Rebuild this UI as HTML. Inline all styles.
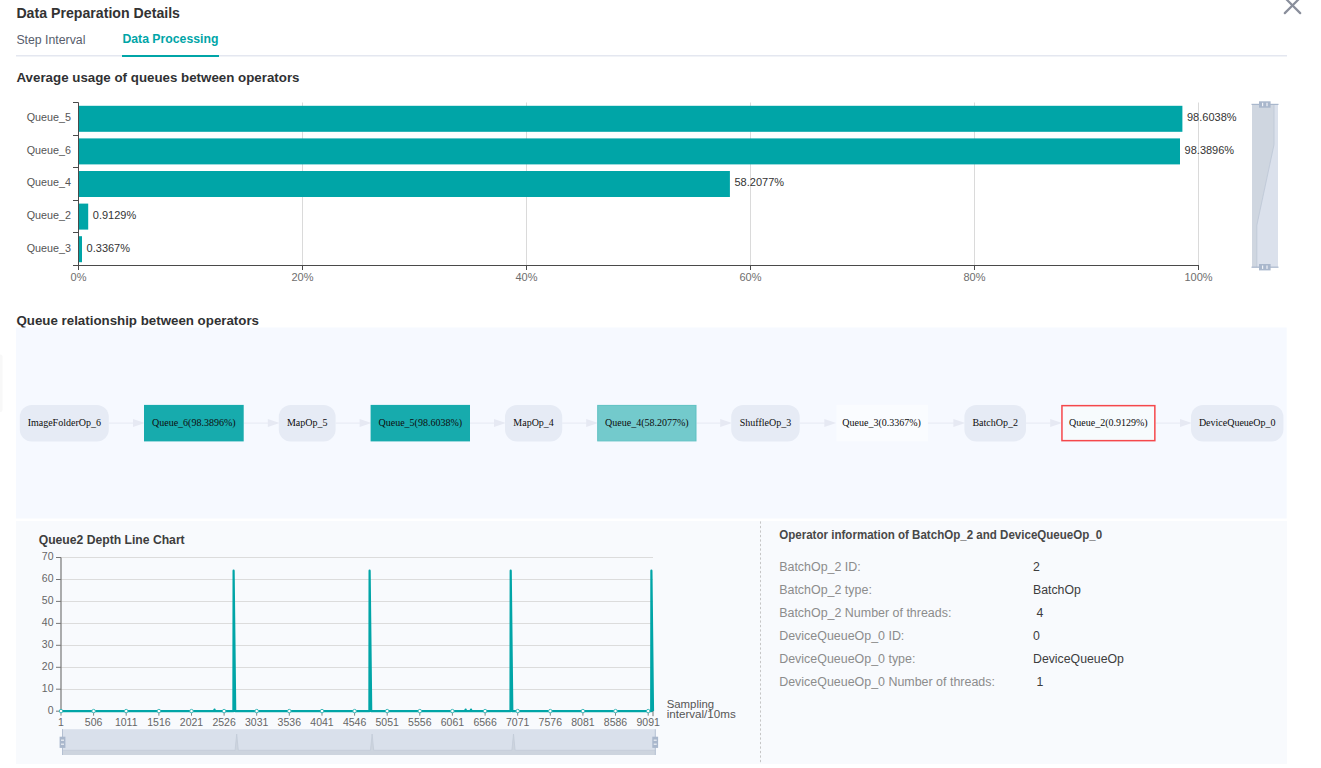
<!DOCTYPE html>
<html><head><meta charset="utf-8"><title>Data Preparation Details</title>
<style>
html,body{margin:0;padding:0;background:#fff;width:1321px;height:768px;overflow:hidden}
svg{display:block}
text{font-family:"Liberation Sans",sans-serif}
.serif{font-family:"Liberation Serif",serif}
</style></head><body>
<svg width="1321" height="768" viewBox="0 0 1321 768">
<rect x="0" y="0" width="1321" height="768" fill="#ffffff"/>

<text x="16.4" y="17.7" font-size="14.6" font-weight="bold" fill="#333333" textLength="163.6" lengthAdjust="spacingAndGlyphs">Data Preparation Details</text>
<text x="16.4" y="43.6" font-size="12" fill="#575d6c" textLength="69" lengthAdjust="spacingAndGlyphs">Step Interval</text>
<text x="122.4" y="43.3" font-size="12" font-weight="bold" fill="#00a5a7" textLength="96" lengthAdjust="spacingAndGlyphs">Data Processing</text>
<rect x="16" y="55" width="1271" height="1.5" fill="#e4e7f0"/>
<rect x="122" y="55" width="97" height="2" fill="#00a5a7"/>
<g stroke="#8a8f9c" stroke-width="2.2" stroke-linecap="round"><line x1="1284.8" y1="13.1" x2="1300.4" y2="-2.5"/><line x1="1300.2" y1="13.1" x2="1284.6" y2="-2.5"/></g>
<text x="16.5" y="82.3" font-size="13" font-weight="bold" fill="#303133" textLength="283" lengthAdjust="spacingAndGlyphs">Average usage of queues between operators</text>
<line x1="302.5" y1="102.5" x2="302.5" y2="265.5" stroke="#dadada" stroke-width="1"/>
<line x1="526.5" y1="102.5" x2="526.5" y2="265.5" stroke="#dadada" stroke-width="1"/>
<line x1="750.5" y1="102.5" x2="750.5" y2="265.5" stroke="#dadada" stroke-width="1"/>
<line x1="974.5" y1="102.5" x2="974.5" y2="265.5" stroke="#dadada" stroke-width="1"/>
<line x1="1198.5" y1="102.5" x2="1198.5" y2="265.5" stroke="#dadada" stroke-width="1"/>
<rect x="78.0" y="105.8" width="1104.4" height="26" fill="#00a5a7"/>
<text x="71" y="120.9" font-size="11" fill="#555" text-anchor="end" textLength="44.3" lengthAdjust="spacingAndGlyphs">Queue_5</text>
<text x="1187.0" y="120.9" font-size="11" fill="#333">98.6038%</text>
<rect x="78.0" y="138.4" width="1102.0" height="26" fill="#00a5a7"/>
<text x="71" y="153.6" font-size="11" fill="#555" text-anchor="end" textLength="44.3" lengthAdjust="spacingAndGlyphs">Queue_6</text>
<text x="1184.6" y="153.6" font-size="11" fill="#333">98.3896%</text>
<rect x="78.0" y="171.0" width="651.9" height="26" fill="#00a5a7"/>
<text x="71" y="186.4" font-size="11" fill="#555" text-anchor="end" textLength="44.3" lengthAdjust="spacingAndGlyphs">Queue_4</text>
<text x="734.5" y="186.4" font-size="11" fill="#333">58.2077%</text>
<rect x="78.0" y="203.6" width="10.2" height="26" fill="#00a5a7"/>
<text x="71" y="219.1" font-size="11" fill="#555" text-anchor="end" textLength="44.3" lengthAdjust="spacingAndGlyphs">Queue_2</text>
<text x="92.8" y="219.1" font-size="11" fill="#333">0.9129%</text>
<rect x="78.0" y="236.2" width="4.0" height="26" fill="#00a5a7"/>
<text x="71" y="251.8" font-size="11" fill="#555" text-anchor="end" textLength="44.3" lengthAdjust="spacingAndGlyphs">Queue_3</text>
<text x="86.6" y="251.8" font-size="11" fill="#333">0.3367%</text>
<line x1="78.5" y1="102.5" x2="78.5" y2="266.0" stroke="#4a4a4a" stroke-width="1"/>
<line x1="73.0" y1="102.5" x2="78.5" y2="102.5" stroke="#4a4a4a" stroke-width="1"/>
<line x1="73.0" y1="135.5" x2="78.5" y2="135.5" stroke="#4a4a4a" stroke-width="1"/>
<line x1="73.0" y1="167.5" x2="78.5" y2="167.5" stroke="#4a4a4a" stroke-width="1"/>
<line x1="73.0" y1="200.5" x2="78.5" y2="200.5" stroke="#4a4a4a" stroke-width="1"/>
<line x1="73.0" y1="232.5" x2="78.5" y2="232.5" stroke="#4a4a4a" stroke-width="1"/>
<line x1="73.0" y1="265.5" x2="78.5" y2="265.5" stroke="#4a4a4a" stroke-width="1"/>
<line x1="74.0" y1="265.5" x2="1199.0" y2="265.5" stroke="#4a4a4a" stroke-width="1"/>
<line x1="78.5" y1="265.5" x2="78.5" y2="270.0" stroke="#4a4a4a" stroke-width="1"/>
<text x="78.5" y="280.7" font-size="11" fill="#6e6e6e" text-anchor="middle">0%</text>
<line x1="302.5" y1="265.5" x2="302.5" y2="270.0" stroke="#4a4a4a" stroke-width="1"/>
<text x="302.5" y="280.7" font-size="11" fill="#6e6e6e" text-anchor="middle">20%</text>
<line x1="526.5" y1="265.5" x2="526.5" y2="270.0" stroke="#4a4a4a" stroke-width="1"/>
<text x="526.5" y="280.7" font-size="11" fill="#6e6e6e" text-anchor="middle">40%</text>
<line x1="750.5" y1="265.5" x2="750.5" y2="270.0" stroke="#4a4a4a" stroke-width="1"/>
<text x="750.5" y="280.7" font-size="11" fill="#6e6e6e" text-anchor="middle">60%</text>
<line x1="974.5" y1="265.5" x2="974.5" y2="270.0" stroke="#4a4a4a" stroke-width="1"/>
<text x="974.5" y="280.7" font-size="11" fill="#6e6e6e" text-anchor="middle">80%</text>
<line x1="1198.5" y1="265.5" x2="1198.5" y2="270.0" stroke="#4a4a4a" stroke-width="1"/>
<text x="1198.5" y="280.7" font-size="11" fill="#6e6e6e" text-anchor="middle">100%</text>
<rect x="1252" y="104.4" width="26" height="162.8" fill="#dbe1ec"/>
<path d="M1252,104.4 L1274,104.4 L1274,144.7 L1256.8,225.4 L1256.8,267.2 L1252,267.2 Z" fill="#cfd6e0"/>
<path d="M1274,104.4 L1274,144.7 L1256.8,225.4 L1256.8,267.2" fill="none" stroke="#bcc6d6" stroke-width="0.8"/>
<line x1="1251.5" y1="104.4" x2="1278.5" y2="104.4" stroke="#a9b7cc" stroke-width="1.2"/>
<line x1="1251.5" y1="267.2" x2="1278.5" y2="267.2" stroke="#a9b7cc" stroke-width="1.2"/>
<rect x="1259" y="101.3" width="11.6" height="6.4" fill="#a9b7cc"/>
<rect x="1262" y="102.8" width="1.2" height="3.4" fill="#eef1f6"/><rect x="1266.4" y="102.8" width="1.2" height="3.4" fill="#eef1f6"/>
<rect x="1259" y="264" width="11.6" height="6.4" fill="#a9b7cc"/>
<rect x="1262" y="265.5" width="1.2" height="3.4" fill="#eef1f6"/><rect x="1266.4" y="265.5" width="1.2" height="3.4" fill="#eef1f6"/>
<rect x="-2" y="354.6" width="4.5" height="57.3" rx="2" fill="#f8f8f8"/>
<text x="16.5" y="324.7" font-size="13" font-weight="bold" fill="#303133" textLength="242.5" lengthAdjust="spacingAndGlyphs">Queue relationship between operators</text>
<rect x="16" y="327.5" width="1270.7" height="191" fill="#f6f9ff"/>
<line x1="108.8" y1="423.1" x2="134" y2="423.1" stroke="#e6e9f3" stroke-width="1"/>
<path d="M133,419.1 L144.8,423.1 L133,427.1 Z" fill="#e6e9f3"/>
<line x1="243.7" y1="423.1" x2="268.8" y2="423.1" stroke="#e6e9f3" stroke-width="1"/>
<path d="M267.8,419.1 L279.6,423.1 L267.8,427.1 Z" fill="#e6e9f3"/>
<line x1="335.6" y1="423.1" x2="360.6" y2="423.1" stroke="#e6e9f3" stroke-width="1"/>
<path d="M359.6,419.1 L371.40000000000003,423.1 L359.6,427.1 Z" fill="#e6e9f3"/>
<line x1="470" y1="423.1" x2="495" y2="423.1" stroke="#e6e9f3" stroke-width="1"/>
<path d="M494,419.1 L505.8,423.1 L494,427.1 Z" fill="#e6e9f3"/>
<line x1="562.2" y1="423.1" x2="587.2" y2="423.1" stroke="#e6e9f3" stroke-width="1"/>
<path d="M586.2,419.1 L598.0,423.1 L586.2,427.1 Z" fill="#e6e9f3"/>
<line x1="696.5" y1="423.1" x2="721.2" y2="423.1" stroke="#e6e9f3" stroke-width="1"/>
<path d="M720.2,419.1 L732.0,423.1 L720.2,427.1 Z" fill="#e6e9f3"/>
<line x1="799.7" y1="423.1" x2="825.3" y2="423.1" stroke="#e6e9f3" stroke-width="1"/>
<path d="M824.3,419.1 L836.0999999999999,423.1 L824.3,427.1 Z" fill="#e6e9f3"/>
<line x1="928" y1="423.1" x2="954.4" y2="423.1" stroke="#e6e9f3" stroke-width="1"/>
<path d="M953.4,419.1 L965.1999999999999,423.1 L953.4,427.1 Z" fill="#e6e9f3"/>
<line x1="1026" y1="423.1" x2="1051.2" y2="423.1" stroke="#e6e9f3" stroke-width="1"/>
<path d="M1050.2,419.1 L1062.0,423.1 L1050.2,427.1 Z" fill="#e6e9f3"/>
<line x1="1155.6" y1="423.1" x2="1181" y2="423.1" stroke="#e6e9f3" stroke-width="1"/>
<path d="M1180,419.1 L1191.8,423.1 L1180,427.1 Z" fill="#e6e9f3"/>
<rect x="19.8" y="404.9" width="89.0" height="36.5" rx="12" ry="12" fill="#e6ebf5"/>
<text class="serif" x="64.3" y="426.1" font-size="10" fill="#0d0d0d" text-anchor="middle">ImageFolderOp_6</text>
<rect x="144" y="404.9" width="99.7" height="36.5" fill="#17abad"/>
<text class="serif" x="193.8" y="426.1" font-size="10" fill="#0d0d0d" text-anchor="middle">Queue_6(98.3896%)</text>
<rect x="278.8" y="404.9" width="56.8" height="36.5" rx="12" ry="12" fill="#e6ebf5"/>
<text class="serif" x="307.2" y="426.1" font-size="10" fill="#0d0d0d" text-anchor="middle">MapOp_5</text>
<rect x="370.6" y="404.9" width="99.4" height="36.5" fill="#17abad"/>
<text class="serif" x="420.3" y="426.1" font-size="10" fill="#0d0d0d" text-anchor="middle">Queue_5(98.6038%)</text>
<rect x="505" y="404.9" width="57.2" height="36.5" rx="12" ry="12" fill="#e6ebf5"/>
<text class="serif" x="533.6" y="426.1" font-size="10" fill="#0d0d0d" text-anchor="middle">MapOp_4</text>
<rect x="597.7" y="405.4" width="98.3" height="35.5" fill="#73cacc" stroke="#5fc1c3" stroke-width="1"/>
<text class="serif" x="646.9" y="426.1" font-size="10" fill="#0d0d0d" text-anchor="middle">Queue_4(58.2077%)</text>
<rect x="731.2" y="404.9" width="68.5" height="36.5" rx="12" ry="12" fill="#e6ebf5"/>
<text class="serif" x="765.5" y="426.1" font-size="10" fill="#0d0d0d" text-anchor="middle">ShuffleOp_3</text>
<rect x="836.3" y="404.9" width="91.7" height="36.5" fill="#fafcff"/>
<text class="serif" x="881.6" y="426.1" font-size="10" fill="#0d0d0d" text-anchor="middle">Queue_3(0.3367%)</text>
<rect x="964.4" y="404.9" width="61.6" height="36.5" rx="12" ry="12" fill="#e6ebf5"/>
<text class="serif" x="995.2" y="426.1" font-size="10" fill="#0d0d0d" text-anchor="middle">BatchOp_2</text>
<rect x="1061.95" y="405.65" width="92.9" height="35.0" fill="#f7fbfd" stroke="#f5484b" stroke-width="1.5"/>
<text class="serif" x="1108.4" y="426.1" font-size="10" fill="#0d0d0d" text-anchor="middle">Queue_2(0.9129%)</text>
<rect x="1191" y="404.9" width="92.4" height="36.5" rx="12" ry="12" fill="#e6ebf5"/>
<text class="serif" x="1237.2" y="426.1" font-size="10" fill="#0d0d0d" text-anchor="middle">DeviceQueueOp_0</text>
<rect x="16" y="521" width="1271" height="243" fill="#f8fafd"/>
<line x1="760.5" y1="521.4" x2="760.5" y2="764" stroke="#c6c6c6" stroke-width="1" stroke-dasharray="2.3,2.2"/>
<text x="38.7" y="543.6" font-size="12" font-weight="bold" fill="#3d3d3d" textLength="146" lengthAdjust="spacingAndGlyphs">Queue2 Depth Line Chart</text>
<line x1="61.0" y1="689.5" x2="653.0" y2="689.5" stroke="#dcdcdc" stroke-width="1"/>
<line x1="61.0" y1="667.5" x2="653.0" y2="667.5" stroke="#dcdcdc" stroke-width="1"/>
<line x1="61.0" y1="645.5" x2="653.0" y2="645.5" stroke="#dcdcdc" stroke-width="1"/>
<line x1="61.0" y1="623.5" x2="653.0" y2="623.5" stroke="#dcdcdc" stroke-width="1"/>
<line x1="61.0" y1="601.5" x2="653.0" y2="601.5" stroke="#dcdcdc" stroke-width="1"/>
<line x1="61.0" y1="579.5" x2="653.0" y2="579.5" stroke="#dcdcdc" stroke-width="1"/>
<line x1="61.0" y1="557.5" x2="653.0" y2="557.5" stroke="#dcdcdc" stroke-width="1"/>
<line x1="61.0" y1="557.5" x2="61.0" y2="711.2" stroke="#777" stroke-width="1.2"/>
<line x1="56.0" y1="711.2" x2="61.0" y2="711.2" stroke="#777" stroke-width="1"/>
<text x="53.5" y="713.7" font-size="10.5" fill="#666" text-anchor="end">0</text>
<line x1="56.0" y1="689.2" x2="61.0" y2="689.2" stroke="#777" stroke-width="1"/>
<text x="53.5" y="691.7" font-size="10.5" fill="#666" text-anchor="end">10</text>
<line x1="56.0" y1="667.3" x2="61.0" y2="667.3" stroke="#777" stroke-width="1"/>
<text x="53.5" y="669.8" font-size="10.5" fill="#666" text-anchor="end">20</text>
<line x1="56.0" y1="645.3" x2="61.0" y2="645.3" stroke="#777" stroke-width="1"/>
<text x="53.5" y="647.8" font-size="10.5" fill="#666" text-anchor="end">30</text>
<line x1="56.0" y1="623.4" x2="61.0" y2="623.4" stroke="#777" stroke-width="1"/>
<text x="53.5" y="625.9" font-size="10.5" fill="#666" text-anchor="end">40</text>
<line x1="56.0" y1="601.4" x2="61.0" y2="601.4" stroke="#777" stroke-width="1"/>
<text x="53.5" y="603.9" font-size="10.5" fill="#666" text-anchor="end">50</text>
<line x1="56.0" y1="579.5" x2="61.0" y2="579.5" stroke="#777" stroke-width="1"/>
<text x="53.5" y="582.0" font-size="10.5" fill="#666" text-anchor="end">60</text>
<line x1="56.0" y1="557.5" x2="61.0" y2="557.5" stroke="#777" stroke-width="1"/>
<text x="53.5" y="560.0" font-size="10.5" fill="#666" text-anchor="end">70</text>
<line x1="61.0" y1="711.2" x2="653.0" y2="711.2" stroke="#333" stroke-width="1"/>
<line x1="61.0" y1="711.2" x2="61.0" y2="715.7" stroke="#858585" stroke-width="1"/>
<text x="61.0" y="725.8" font-size="10.5" fill="#666" text-anchor="middle">1</text>
<line x1="93.6" y1="711.2" x2="93.6" y2="715.7" stroke="#858585" stroke-width="1"/>
<text x="93.6" y="725.8" font-size="10.5" fill="#666" text-anchor="middle">506</text>
<line x1="126.2" y1="711.2" x2="126.2" y2="715.7" stroke="#858585" stroke-width="1"/>
<text x="126.2" y="725.8" font-size="10.5" fill="#666" text-anchor="middle">1011</text>
<line x1="158.9" y1="711.2" x2="158.9" y2="715.7" stroke="#858585" stroke-width="1"/>
<text x="158.9" y="725.8" font-size="10.5" fill="#666" text-anchor="middle">1516</text>
<line x1="191.5" y1="711.2" x2="191.5" y2="715.7" stroke="#858585" stroke-width="1"/>
<text x="191.5" y="725.8" font-size="10.5" fill="#666" text-anchor="middle">2021</text>
<line x1="224.1" y1="711.2" x2="224.1" y2="715.7" stroke="#858585" stroke-width="1"/>
<text x="224.1" y="725.8" font-size="10.5" fill="#666" text-anchor="middle">2526</text>
<line x1="256.7" y1="711.2" x2="256.7" y2="715.7" stroke="#858585" stroke-width="1"/>
<text x="256.7" y="725.8" font-size="10.5" fill="#666" text-anchor="middle">3031</text>
<line x1="289.3" y1="711.2" x2="289.3" y2="715.7" stroke="#858585" stroke-width="1"/>
<text x="289.3" y="725.8" font-size="10.5" fill="#666" text-anchor="middle">3536</text>
<line x1="322.0" y1="711.2" x2="322.0" y2="715.7" stroke="#858585" stroke-width="1"/>
<text x="322.0" y="725.8" font-size="10.5" fill="#666" text-anchor="middle">4041</text>
<line x1="354.6" y1="711.2" x2="354.6" y2="715.7" stroke="#858585" stroke-width="1"/>
<text x="354.6" y="725.8" font-size="10.5" fill="#666" text-anchor="middle">4546</text>
<line x1="387.2" y1="711.2" x2="387.2" y2="715.7" stroke="#858585" stroke-width="1"/>
<text x="387.2" y="725.8" font-size="10.5" fill="#666" text-anchor="middle">5051</text>
<line x1="419.8" y1="711.2" x2="419.8" y2="715.7" stroke="#858585" stroke-width="1"/>
<text x="419.8" y="725.8" font-size="10.5" fill="#666" text-anchor="middle">5556</text>
<line x1="452.4" y1="711.2" x2="452.4" y2="715.7" stroke="#858585" stroke-width="1"/>
<text x="452.4" y="725.8" font-size="10.5" fill="#666" text-anchor="middle">6061</text>
<line x1="485.1" y1="711.2" x2="485.1" y2="715.7" stroke="#858585" stroke-width="1"/>
<text x="485.1" y="725.8" font-size="10.5" fill="#666" text-anchor="middle">6566</text>
<line x1="517.7" y1="711.2" x2="517.7" y2="715.7" stroke="#858585" stroke-width="1"/>
<text x="517.7" y="725.8" font-size="10.5" fill="#666" text-anchor="middle">7071</text>
<line x1="550.3" y1="711.2" x2="550.3" y2="715.7" stroke="#858585" stroke-width="1"/>
<text x="550.3" y="725.8" font-size="10.5" fill="#666" text-anchor="middle">7576</text>
<line x1="582.9" y1="711.2" x2="582.9" y2="715.7" stroke="#858585" stroke-width="1"/>
<text x="582.9" y="725.8" font-size="10.5" fill="#666" text-anchor="middle">8081</text>
<line x1="615.5" y1="711.2" x2="615.5" y2="715.7" stroke="#858585" stroke-width="1"/>
<text x="615.5" y="725.8" font-size="10.5" fill="#666" text-anchor="middle">8586</text>
<line x1="648.2" y1="711.2" x2="648.2" y2="715.7" stroke="#858585" stroke-width="1"/>
<text x="648.2" y="725.8" font-size="10.5" fill="#666" text-anchor="middle">9091</text>
<line x1="653.0" y1="711.2" x2="653.0" y2="716.2" stroke="#777" stroke-width="1"/>
<path d="M61.0,711.2 L213.9,711.2 L214.5,709.6 L215.1,711.2 L233.4,711.2 L233.6,570.7 L235.2,711.2 L369.4,711.2 L369.6,570.7 L371.2,711.2 L465.0,711.2 L465.6,709.6 L466.2,711.2 L470.4,711.2 L471.0,709.6 L471.6,711.2 L510.5,711.2 L510.7,570.7 L512.3,711.2 L651.2,711.2 L651.4,570.7 L653.0,711.2 L653.0,711.2" fill="none" stroke="#00a5a7" stroke-width="2.2" stroke-linejoin="round"/>
<circle cx="61.0" cy="711.1" r="1.75" fill="#fff" stroke="#3fb8ba" stroke-width="1"/>
<circle cx="93.6" cy="711.1" r="1.75" fill="#fff" stroke="#3fb8ba" stroke-width="1"/>
<circle cx="126.2" cy="711.1" r="1.75" fill="#fff" stroke="#3fb8ba" stroke-width="1"/>
<circle cx="158.9" cy="711.1" r="1.75" fill="#fff" stroke="#3fb8ba" stroke-width="1"/>
<circle cx="191.5" cy="711.1" r="1.75" fill="#fff" stroke="#3fb8ba" stroke-width="1"/>
<circle cx="224.1" cy="711.1" r="1.75" fill="#fff" stroke="#3fb8ba" stroke-width="1"/>
<circle cx="256.7" cy="711.1" r="1.75" fill="#fff" stroke="#3fb8ba" stroke-width="1"/>
<circle cx="289.3" cy="711.1" r="1.75" fill="#fff" stroke="#3fb8ba" stroke-width="1"/>
<circle cx="322.0" cy="711.1" r="1.75" fill="#fff" stroke="#3fb8ba" stroke-width="1"/>
<circle cx="354.6" cy="711.1" r="1.75" fill="#fff" stroke="#3fb8ba" stroke-width="1"/>
<circle cx="387.2" cy="711.1" r="1.75" fill="#fff" stroke="#3fb8ba" stroke-width="1"/>
<circle cx="419.8" cy="711.1" r="1.75" fill="#fff" stroke="#3fb8ba" stroke-width="1"/>
<circle cx="452.4" cy="711.1" r="1.75" fill="#fff" stroke="#3fb8ba" stroke-width="1"/>
<circle cx="485.1" cy="711.1" r="1.75" fill="#fff" stroke="#3fb8ba" stroke-width="1"/>
<circle cx="517.7" cy="711.1" r="1.75" fill="#fff" stroke="#3fb8ba" stroke-width="1"/>
<circle cx="550.3" cy="711.1" r="1.75" fill="#fff" stroke="#3fb8ba" stroke-width="1"/>
<circle cx="582.9" cy="711.1" r="1.75" fill="#fff" stroke="#3fb8ba" stroke-width="1"/>
<circle cx="615.5" cy="711.1" r="1.75" fill="#fff" stroke="#3fb8ba" stroke-width="1"/>
<circle cx="648.2" cy="711.1" r="1.75" fill="#fff" stroke="#3fb8ba" stroke-width="1"/>
<text x="666.7" y="708" font-size="11.3" fill="#555" textLength="47.5" lengthAdjust="spacingAndGlyphs">Sampling</text>
<text x="666.7" y="718.4" font-size="11.3" fill="#555" textLength="69" lengthAdjust="spacingAndGlyphs">interval/10ms</text>
<rect x="62" y="729.2" width="593.3" height="25.8" fill="#d9e0eb"/>
<path d="M62,755 L62,750.3 L235.1,750.3 L236.7,734 L238.29999999999998,750.3 L370.5,750.3 L372.1,734 L373.70000000000005,750.3 L511.9,750.3 L513.5,734 L515.1,750.3 L655.3,750.3 L655.3,755 Z" fill="#cdd4de"/>
<path d="M62,750.3 L235.1,750.3 L236.7,734 L238.29999999999998,750.3 L370.5,750.3 L372.1,734 L373.70000000000005,750.3 L511.9,750.3 L513.5,734 L515.1,750.3 L655.3,750.3" fill="none" stroke="#c3cbd8" stroke-width="0.8"/>
<line x1="62.5" y1="729.2" x2="62.5" y2="755" stroke="#b4c0d2" stroke-width="1"/>
<line x1="655.3" y1="729.2" x2="655.3" y2="755" stroke="#b4c0d2" stroke-width="1"/>
<rect x="59.6" y="736.7" width="5.8" height="11.2" fill="#a9b7cc"/>
<rect x="61.0" y="739.6" width="3.0" height="1.2" fill="#eef1f6"/><rect x="61.0" y="743.6" width="3.0" height="1.2" fill="#eef1f6"/>
<rect x="652.3" y="736.7" width="5.8" height="11.2" fill="#a9b7cc"/>
<rect x="653.6999999999999" y="739.6" width="3.0" height="1.2" fill="#eef1f6"/><rect x="653.6999999999999" y="743.6" width="3.0" height="1.2" fill="#eef1f6"/>
<text x="779.2" y="538.7" font-size="12" font-weight="bold" fill="#484848" textLength="323" lengthAdjust="spacingAndGlyphs">Operator information of BatchOp_2 and DeviceQueueOp_0</text>
<text x="779.2" y="570.9" font-size="12.45" fill="#8c8c8c">BatchOp_2 ID:</text>
<text x="1033" y="570.9" font-size="12.3" fill="#3d3d3d" xml:space="preserve">2</text>
<text x="779.2" y="593.9" font-size="12.45" fill="#8c8c8c">BatchOp_2 type:</text>
<text x="1033" y="593.9" font-size="12.3" fill="#3d3d3d" xml:space="preserve">BatchOp</text>
<text x="779.2" y="616.9" font-size="12.45" fill="#8c8c8c">BatchOp_2 Number of threads:</text>
<text x="1033" y="616.9" font-size="12.3" fill="#3d3d3d" xml:space="preserve"> 4</text>
<text x="779.2" y="639.9" font-size="12.45" fill="#8c8c8c">DeviceQueueOp_0 ID:</text>
<text x="1033" y="639.9" font-size="12.3" fill="#3d3d3d" xml:space="preserve">0</text>
<text x="779.2" y="662.9" font-size="12.45" fill="#8c8c8c">DeviceQueueOp_0 type:</text>
<text x="1033" y="662.9" font-size="12.3" fill="#3d3d3d" xml:space="preserve">DeviceQueueOp</text>
<text x="779.2" y="685.9" font-size="12.45" fill="#8c8c8c">DeviceQueueOp_0 Number of threads:</text>
<text x="1033" y="685.9" font-size="12.3" fill="#3d3d3d" xml:space="preserve"> 1</text>
</svg></body></html>
